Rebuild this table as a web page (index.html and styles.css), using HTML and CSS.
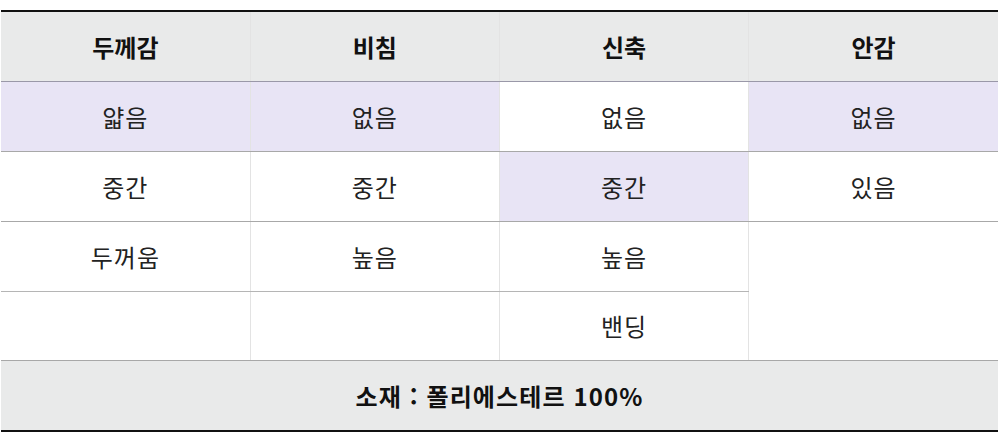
FILE: index.html
```html
<!DOCTYPE html>
<html lang="ko">
<head>
<meta charset="utf-8">
<link rel="stylesheet" href="styles.css">
</head>
<body>
<table class="spec">
  <thead>
    <tr><th>두께감</th><th>비침</th><th>신축</th><th>안감</th></tr>
  </thead>
  <tbody>
    <tr class="r1"><td class="on">얇음</td><td class="on">없음</td><td>없음</td><td class="on">없음</td></tr>
    <tr><td>중간</td><td>중간</td><td class="on">중간</td><td>있음</td></tr>
    <tr class="r3"><td>두꺼움</td><td>높음</td><td>높음</td><td rowspan="2" class="span"></td></tr>
    <tr class="r4"><td></td><td></td><td>밴딩</td></tr>
  </tbody>
  <tfoot>
    <tr><td colspan="4">소재 : 폴리에스테르 100%</td></tr>
  </tfoot>
</table>
</body>
</html>
```
FILE: styles.css
```css
html, body { margin: 0; padding: 0; background: #fff; }
body { padding: 10px 0 0 1px; }
.spec {
  width: 997px;
  border-collapse: collapse;
  table-layout: fixed;
  font-family: "Noto Sans CJK KR", "Noto Sans", sans-serif;
  border-top: 2px solid #111;
  border-bottom: 2px solid #111;
}
.spec th, .spec td {
  text-align: center;
  vertical-align: middle;
  padding: 0;
  height: 69px;
  font-size: 24px;
  line-height: 1;
  letter-spacing: 1px;
  color: #222;
  border-left: 1px solid #e3e3e3;
  border-bottom: 1px solid #a8a8a8;
}
.spec th:first-child, .spec td:first-child { border-left: none; }
.spec th {
  background: #e9eaea;
  color: #111;
  font-weight: 700;
  letter-spacing: 0;
  border-bottom: 1px solid #9a98a8;
}
.spec td.on { background: #e8e4f5; }
.spec .r3 td { border-bottom: 1px solid #b5b5b5; }
.spec td.span { border-bottom: 1px solid #a8a8a8; }
.spec .r4 td { height: 68px; }
.spec tfoot td {
  background: #e9eaea;
  color: #111;
  font-weight: 700;
  letter-spacing: 1.1px;
  border-left: none;
  border-top: 1px solid #a8a8a8;
  border-bottom: none;
  height: 69px;
}
```
